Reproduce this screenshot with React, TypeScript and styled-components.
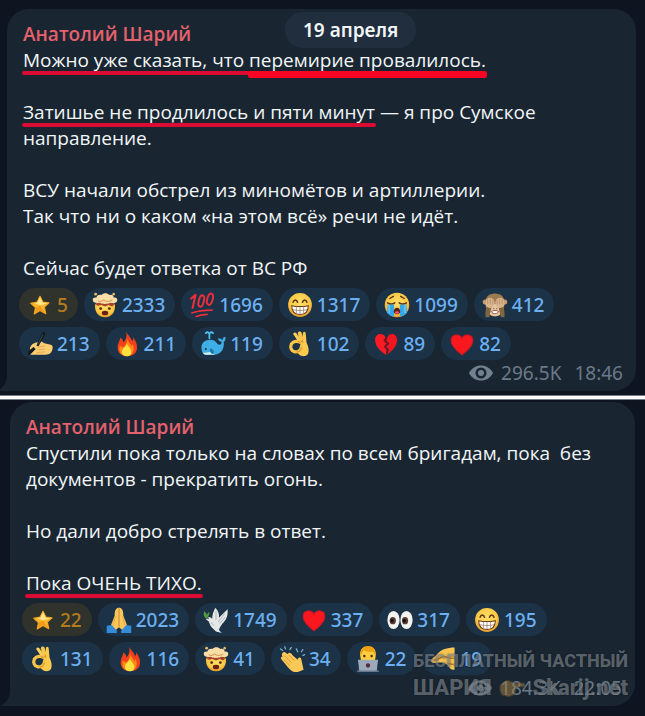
import React from "react";
import styled, { createGlobalStyle } from "styled-components";

const GlobalStyle = createGlobalStyle`
  * { box-sizing: border-box; }
  body {
    margin: 0;
    background: #0e1520;
    font-family: "Noto Sans", "Open Sans", sans-serif;
    font-size: 19px;
    line-height: 26px;
    color: #f3f6f8;
  }
  p { margin: 0; }
`;

const Page = styled.main`
  position: relative;
  min-height: 716px;
`;

const Section = styled.section<{ $second?: boolean }>`
  padding: ${(p) => (p.$second ? "2px 10px 10px 10px" : "9px 9px 4px 7px")};
`;

const Divider = styled.hr`
  height: 5px;
  margin: 0;
  border: solid #767d88;
  border-width: 1px 0;
  background: #fbfbfd;
`;

const Card = styled.article`
  position: relative;
  padding: 12px 12px 5px;
  border-radius: 22px 22px 22px 0;
  background: #192632;
`;

const Tail = styled.svg`
  position: absolute;
  right: 100%;
  bottom: 0;
  width: 10px;
  height: 16px;
  fill: #192632;
`;

const Author = styled.h2`
  margin: 0;
  padding: 0 4px;
  font-family: "Open Sans", sans-serif;
  font-size: 19px;
  font-weight: 600;
  line-height: 26px;
  color: #e5616c;
`;

const Body = styled.div`
  padding: 0 4px;
  font-family: "Open Sans", sans-serif;
  white-space: pre-wrap;
`;

const Line = styled.p`
  min-height: 26px;
`;

const Marked = styled.span<{ $thick?: boolean }>`
  position: relative;
  &::after {
    content: "";
    position: absolute;
    left: -1px;
    right: -1px;
    top: 24px;
    height: ${(p) => (p.$thick ? 7 : 4)}px;
    border-radius: 2px;
    background: ${(p) => (p.$thick ? "#f80526" : "#dc0b33")};
  }
`;

const DatePill = styled.time`
  position: absolute;
  z-index: 1;
  top: 12px;
  left: 285px;
  padding: 5px 18px;
  border-radius: 18px;
  background: #202e3e;
  font-weight: 600;
  white-space: nowrap;
`;

const Reactions = styled.div`
  display: flex;
  flex-wrap: wrap;
  gap: 6px;
  margin-top: 7px;
  padding-right: 60px;
`;

const Chip = styled.button<{ $gold?: boolean }>`
  display: flex;
  align-items: center;
  gap: 4px;
  height: 33px;
  padding: 0 10px 0 8px;
  border: 0;
  border-radius: 17px;
  background: ${(p) => (p.$gold ? "#30332c" : "#1b3247")};
  color: ${(p) => (p.$gold ? "#b27b1f" : "#6cb0f2")};
  font: inherit;
  font-weight: 500;
`;

const Emoji = styled.svg`
  width: 26px;
  height: 26px;
  flex: none;
`;

const Meta = styled.footer`
  display: flex;
  justify-content: flex-end;
  align-items: center;
  gap: 8px;
  padding-right: 1px;
  color: #6b7a88;
  time { margin-left: 5px; }
`;

const Eye = styled.svg`
  width: 24px;
  height: 18px;
`;

const Watermark = styled.aside`
  position: absolute;
  right: 7px;
  bottom: 5px;
  width: 215px;
  font-family: Roboto, sans-serif;
  font-weight: 800;
  line-height: 27px;
  color: rgba(164, 172, 180, 0.5);
  text-shadow: 0 0 2px rgba(0, 0, 0, 0.5);
  white-space: nowrap;
`;

const MarkRow = styled.div<{ $large?: boolean }>`
  display: flex;
  justify-content: space-between;
  align-items: center;
  font-size: ${(p) => (p.$large ? 22 : 18)}px;
`;

const Hand = styled.svg`
  width: 26px;
  height: 18px;
  opacity: 0.5;
`;

const Yellow = ({ id }: { id: string }) => (
  <radialGradient id={id} cx="50%" cy="40%" r="60%">
    <stop offset="0" stopColor="#ffe06a" />
    <stop offset="0.7" stopColor="#fbc843" />
    <stop offset="1" stopColor="#e79a2e" />
  </radialGradient>
);

const art: Record<string, React.ReactNode> = {
  star: (
    <>
      <path d="M18 6l4 8 8.500 1-6.500 6 2 9-8-4.300-8 4.800 1.700-9-6.700-6 9-1.500z" fill="#fbb92c" stroke="#f6a51f" strokeWidth="1.500" strokeLinejoin="round" />
      <path d="M18 7l3.700 7.500 7.300 1.500-7 1.500-4 1-8-3 4.500-1z" fill="#ffe58a" />
      <path d="M11 29l1.500-8 6-2 6.500 10-7.500-4z" fill="#f19a1c" />
    </>
  ),
  blown: (
    <>
      <Yellow id="gy1" />
      <path d="M4 19c0-4 4-6 14-6s14 2 14 6c0 9-5 16-14 16S4 28 4 19z" fill="url(#gy1)" />
      <path d="M5 17l4-4 4 3 5-2 5 2 4-3 4 4-3 3-5-2-5 2-5-2-5 1z" fill="#a9432b" />
      <path d="M10 15c-5 1-9-1-9-4 0-3 3-4 5-3 0-4 5-5 7-4 3-3 8-3 11 0 4-1 6 1 6 4 3-1 5 1 5 3 0 4-5 5-9 4-5 2-11 2-16 0z" fill="#f9dfa7" />
      <path d="M8 12c3 2 6 1 8-1 3 3 9 3 12 0" fill="none" stroke="#d99d57" strokeWidth="1.500" />
      <circle cx="5" cy="3" r="2" fill="#e9b965" /><circle cx="30" cy="3" r="1.800" fill="#e9b965" />
      <circle cx="12" cy="23" r="2" fill="#5a321b" /><circle cx="24" cy="23" r="2" fill="#5a321b" />
      <ellipse cx="18" cy="29" rx="4.500" ry="3.200" fill="#6a2016" />
    </>
  ),
  hundred: (
    <g fill="none" stroke="#e92f3c" strokeLinecap="round" strokeLinejoin="round">
      <path d="M3 9l6-5L5 22" strokeWidth="3" />
      <ellipse cx="17" cy="12.500" rx="3.500" ry="8" transform="rotate(14 17 12.500)" strokeWidth="2.800" />
      <ellipse cx="29" cy="10" rx="3.700" ry="8" transform="rotate(16 29 10)" strokeWidth="2.800" />
      <path d="M4 29c8-3 17-4 28-4M10 34c5-2 9-2.500 15-3" strokeWidth="2.400" />
    </g>
  ),
  grin: (
    <>
      <Yellow id="gy2" />
      <circle cx="18" cy="18" r="16.500" fill="url(#gy2)" />
      <path d="M8.500 14c1-4 5-4 6 0M21.500 14c1-4 5-4 6 0" fill="none" stroke="#5c3413" strokeWidth="2.200" strokeLinecap="round" />
      <path d="M6.500 19c7 1.500 16 1.500 23 0 0 8-4.500 12-11.500 12S6.500 27 6.500 19z" fill="#fff" stroke="#6b3a16" strokeWidth="1.400" />
      <path d="M8 24.500c6 1.500 14 1.500 20 0M13 20v9.500M18 20.500V31M23 20v9.500" fill="none" stroke="#8d6a4c" strokeWidth="0.900" />
    </>
  ),
  sob: (
    <>
      <Yellow id="gy3" />
      <circle cx="18" cy="18" r="17" fill="url(#gy3)" />
      <path d="M5 15c3 2 7 2 10 0M21 15c3 2 7 2 10 0M8 9l5-3M28 9l-5-3" fill="none" stroke="#5c3413" strokeWidth="2" strokeLinecap="round" />
      <path d="M5 17c3 1 6 1 9 0v17l-5-1-5-4zM22 17c3 1 6 1 9 0l1 12-5 4-5 1z" fill="#35a8e8" />
      <path d="M7 18v11M29 18v11" stroke="#86d5fa" strokeWidth="1.500" />
      <path d="M13.500 27c0-7 9-7 9 0 0 5-9 5-9 0z" fill="#5b1f18" />
      <ellipse cx="18" cy="28.500" rx="3" ry="1.700" fill="#ef5866" />
    </>
  ),
  monkey: (
    <>
      <circle cx="4.500" cy="14" r="3.500" fill="#c79b6b" /><circle cx="31.500" cy="14" r="3.500" fill="#c79b6b" />
      <path d="M5 17C4 7 9 2 18 2s14 5 13 15c0 10-5 17-13 17S5 27 5 17z" fill="#9b7a50" />
      <ellipse cx="18" cy="25" rx="10.500" ry="8.500" fill="#e5c79f" />
      <path d="M5 35c-1-7 0-13 4-17l4 3-3 14zM31 35c1-7 0-13-4-17l-4 3 3 14z" fill="#7f6540" />
      <ellipse cx="11" cy="15" rx="6.500" ry="7" fill="#d9b48c" /><ellipse cx="25" cy="15" rx="6.500" ry="7" fill="#d9b48c" />
      <path d="M8 10v7M11.500 9v8M15 11v6M21 11v6M24.500 9v8M28 10v7" stroke="#a9825e" strokeWidth="0.900" />
      <path d="M13 27c3-2 7-2 10 0-2 4-8 4-10 0z" fill="#fff" stroke="#8a2e22" />
      <path d="M16 23h1M20 23h1" stroke="#6b3022" strokeWidth="1.500" />
    </>
  ),
  write: (
    <>
      <path d="M4 24c2-6 6-8 11-8l4-2 5 3 9 2c3 1 3 4 2 7-1 5-5 7-12 7H7c-3 0-4-3-1-4z" fill="#f9cd72" />
      <path d="M15 22l9-1M15 26l9-1M14 30l10-1" stroke="#dfa04a" strokeWidth="1.100" strokeLinecap="round" />
      <path d="M1 34l1-6 7-6 3 3-6 6zM13 20L21 3c2-3 6-1 4 2l-9 16z" fill="#15191e" />
      <path d="M22 5l-7 14" stroke="#46535e" strokeWidth="1.200" />
    </>
  ),
  fire: (
    <>
      <path d="M17 1c2 5 7 8 8 13 2-1 2-4 1-6 4 5 6 10 6 15 0 8-6 12-14 12S5 30 5 23c0-6 3-9 4-14 3 2 4 5 4 7 4-4 5-9 4-15z" fill="#f2401c" />
      <path d="M18 10c1 5 5 7 6 11l2-3c3 8 1 16-8 16S6 29 8 20l4 3c5-3 6-8 6-13z" fill="#ff8a16" />
      <path d="M18 17c0 4 6 7 6 12 0 4-2 6-6 6s-7-2-7-6c0-5 6-7 7-12z" fill="#ffe13f" />
    </>
  ),
  whale: (
    <>
      <path d="M2 23c0-7 5-11 12-11 9 0 9 7 13 7 2 0 3-2 3-4-3 0-5-2-5-5 3 0 5 1 6 3 0-3 2-5 4-5 1 3 0 6-2 7 1 10-4 18-14 18H10C4 33 2 29 2 23z" fill="#3eaee4" />
      <path d="M4 30c5 0 9 0 13-2 2 2 3 3 3 5H10c-3 0-5-1-6-3z" fill="#d9f3fc" />
      <path d="M14 24c4 1 6 4 5 8-4 0-6-3-5-8z" fill="#1877ad" />
      <circle cx="8" cy="25" r="1.300" fill="#152d3c" />
      <path d="M13 10V4M8 3c3-3 5 0 5 2 0-2 2-5 5-2" fill="none" stroke="#4cc2ef" strokeWidth="2.500" strokeLinecap="round" />
    </>
  ),
  ok: (
    <>
      <path d="M15 14L9 5c-1-3 2-4 4-2l7 11z" fill="#fbcf5e" />
      <path d="M17 14l-2-11c0-3 4-3 5-1l4 13z" fill="#f9c64c" />
      <path d="M21 15l1-12c1-3 4-2 4 1l1 12c3 6 4 12 2 16-3 4-9 4-13 0l-3-4c4 0 7-3 6-7z" fill="#fbcb4e" />
      <path d="M20 17c-5-4-11-3-14 1-2 5 0 10 5 11 5 0 9-3 9-8" fill="none" stroke="#fbc547" strokeWidth="4.500" strokeLinecap="round" />
      <path d="M15 14l4 3M21 12l1 4M20 23c-1 4-4 6-7 6" fill="none" stroke="#d79128" strokeWidth="1.400" />
    </>
  ),
  broken: (
    <g transform="translate(1 1) scale(0.95)">
      <path d="M18 34C8 27 2 20 2 12 2 2 14 1 17 8l-2 5 4 4-4 5 4 4z" fill="#fb1b25" />
      <path d="M20 33c9-7 14-13 14-21C34 2 23 1 20 8l-2 5 5 4-5 5 4 4z" fill="#f01520" />
      <path d="M17 8l-3 5 5 4-4 5 4 4-1 8 3-8-4-4 5-5-4-4 2-5" fill="#7f101c" />
    </g>
  ),
  heart: <path d="M18 33C9 26 3 20 3 13 3 4 14 3 18 10 22 3 33 4 33 13c0 7-6 13-15 20z" fill="#fb171e" stroke="#cc1822" strokeWidth="1.500" />,
  pray: (
    <>
      <path d="M17 1c-4 1-5 5-5 11L7 25l4 9 7-6 7 6 4-9-5-13c0-6-1-10-5-11z" fill="#fbc75c" />
      <path d="M18 2v25" stroke="#d18a30" strokeWidth="1.500" />
      <path d="M13 13l-3 12M23 13l3 12" stroke="#e5a541" strokeWidth="1.300" />
      <path d="M1 26l7-1 7 8v3H1zM35 26l-7-1-7 8v3h14z" fill="#348bd8" />
    </>
  ),
  dove: (
    <>
      <path d="M14 20C11 15 14 7 17 1c4 4 6 9 5 14l12-12c1 9-2 15-7 20-3 4-4 6-5 9l4 4-8-2-4-4c-3-2-5-7-6-10l-4-3 4-3c4 0 6 4 6 6z" fill="#e5e8e7" />
      <path d="M18 6v12M30 9l-9 12M31 14l-8 9M11 21l4 5" fill="none" stroke="#9ba9ad" strokeWidth="1.100" />
      <path d="M3 15C-1 10 2 6 2 6s4 3 3 7c0-5 4-6 4-6s0 6-4 9z" fill="#4f9b3f" />
      <circle cx="7" cy="16" r="1" fill="#283139" />
    </>
  ),
  eyes: (
    <>
      <ellipse cx="9" cy="18" rx="8.500" ry="12.500" fill="#f3f3ef" /><ellipse cx="27" cy="18" rx="8.500" ry="12.500" fill="#f3f3ef" />
      <ellipse cx="8" cy="19" rx="4.300" ry="5" fill="#5b3b31" /><ellipse cx="25" cy="19" rx="4.300" ry="5" fill="#5b3b31" />
      <circle cx="7" cy="19" r="2.300" fill="#100f12" /><circle cx="24" cy="19" r="2.300" fill="#100f12" />
    </>
  ),
  clap: (
    <>
      <path d="M5 15c-3-5 2-9 5-5l2 1c2-3 5-1 7 2l7 6c0-4 5-4 5 0l3 14-8 3c-6 1-10-2-14-7L3 18c-1-2 0-3 2-3z" fill="#fac858" />
      <path d="M8 14l9 9M7 19l8 8M14 13l7 7" stroke="#d99332" strokeWidth="1.300" strokeLinecap="round" />
      <path d="M5 6L2 4M9 4L8 1M15 5l2-3M26 8l-2-4M31 8l2-3M33 13l3-1" stroke="#7bb6ce" strokeWidth="1.700" strokeLinecap="round" />
    </>
  ),
  laptop: (
    <>
      <path d="M5 34c0-7 4-10 13-10s13 3 13 10z" fill="#7c4d9b" />
      <path d="M8 18C5 5 10 1 18 1s13 4 10 17c-1 6-5 9-10 9S9 24 8 18z" fill="#ffcf3e" />
      <path d="M8 13C7 4 11 0 18 0s11 4 10 13l-3-5c-5 1-9 0-13-2z" fill="#eda312" />
      <circle cx="13" cy="14" r="1.800" fill="#513315" /><circle cx="23" cy="14" r="1.800" fill="#513315" />
      <path d="M4 19h28l-2 16H6z" fill="#9ca9ba" /><path d="M3 34h30v2H3z" fill="#68778d" />
      <circle cx="18" cy="27" r="3" fill="#57283e" />
    </>
  ),
  salute: (
    <>
      <path d="M1 21c2-5 7-7 10-11 5-5 12-8 23-8v31c-6 0-7-3-9-6-4-3-7-5-12-4-4 1-10 1-12-2z" fill="#f8c551" />
      <path d="M5 19c7 2 9-5 15-4 5 0 8 3 13 2M24 25c4-1 6 0 9 1" fill="none" stroke="#bb7427" strokeWidth="2" />
    </>
  ),
};

type Item = [name: string, count: number];

const ReactionList = ({ items }: { items: Item[] }) => (
  <Reactions>
    {items.map(([name, count]) => (
      <Chip key={name} type="button" $gold={name === "star"}>
        <Emoji viewBox="0 0 36 36" aria-hidden="true">{art[name]}</Emoji>
        {count}
      </Chip>
    ))}
  </Reactions>
);

const Views = ({ count, time }: { count: string; time: string }) => (
  <Meta>
    <Eye viewBox="0 0 24 18" aria-hidden="true">
      <path d="M0 9C5-1 19-1 24 9 19 19 5 19 0 9z" fill="#718190" />
      <circle cx="12" cy="9" r="5.500" fill="#192632" />
      <circle cx="12" cy="9" r="3" fill="#718190" />
    </Eye>
    <span>{count}</span>
    <time>{time}</time>
  </Meta>
);

const CardTail = () => (
  <Tail viewBox="0 0 10 16" aria-hidden="true"><path d="M10 0c0 8-4 13-10 16h10z" /></Tail>
);

export default function App() {
  return (
    <>
      <GlobalStyle />
      <Page>
        <DatePill>19 апреля</DatePill>
        <Section>
          <Card>
            <CardTail />
            <Author>Анатолий Шарий</Author>
            <Body>
              <Line><Marked>Можно уже сказать, что </Marked><Marked $thick>перемирие провалилось.</Marked></Line>
              <Line />
              <Line><Marked>Затишье не продлилось и пяти минут</Marked> — я про Сумское направление.</Line>
              <Line />
              <Line>ВСУ начали обстрел из миномётов и артиллерии.</Line>
              <Line>Так что ни о каком «на этом всё» речи не идёт.</Line>
              <Line />
              <Line>Сейчас будет ответка от ВС РФ</Line>
            </Body>
            <ReactionList items={[["star", 5], ["blown", 2333], ["hundred", 1696], ["grin", 1317], ["sob", 1099], ["monkey", 412], ["write", 213], ["fire", 211], ["whale", 119], ["ok", 102], ["broken", 89], ["heart", 82]]} />
            <Views count="296.5K" time="18:46" />
          </Card>
        </Section>
        <Divider />
        <Section $second>
          <Card>
            <CardTail />
            <Author>Анатолий Шарий</Author>
            <Body>
              <Line>Спустили пока только на словах по всем бригадам, пока  без документов - прекратить огонь.</Line>
              <Line />
              <Line>Но дали добро стрелять в ответ.</Line>
              <Line />
              <Line><Marked>Пока ОЧЕНЬ ТИХО.</Marked></Line>
            </Body>
            <ReactionList items={[["star", 22], ["pray", 2023], ["dove", 1749], ["heart", 337], ["eyes", 317], ["grin", 195], ["ok", 131], ["fire", 116], ["blown", 41], ["clap", 34], ["laptop", 22], ["salute", 19]]} />
            <Views count="184.3K" time="22:05" />
            <Watermark>
              <MarkRow><span>БЕСПЛАТНЫЙ</span><span>ЧАСТНЫЙ</span></MarkRow>
              <MarkRow $large>
                <span>ШАРИЯ</span>
                <Hand viewBox="0 0 26 18" aria-hidden="true">
                  <path d="M1 6l7-5 8 3h9c2 2 1 4-1 4h-7l-1 7-6 3-7-2-2-4z" fill="#a98242" stroke="#594a31" />
                </Hand>
                <span>Skarij.net</span>
              </MarkRow>
            </Watermark>
          </Card>
        </Section>
      </Page>
    </>
  );
}
